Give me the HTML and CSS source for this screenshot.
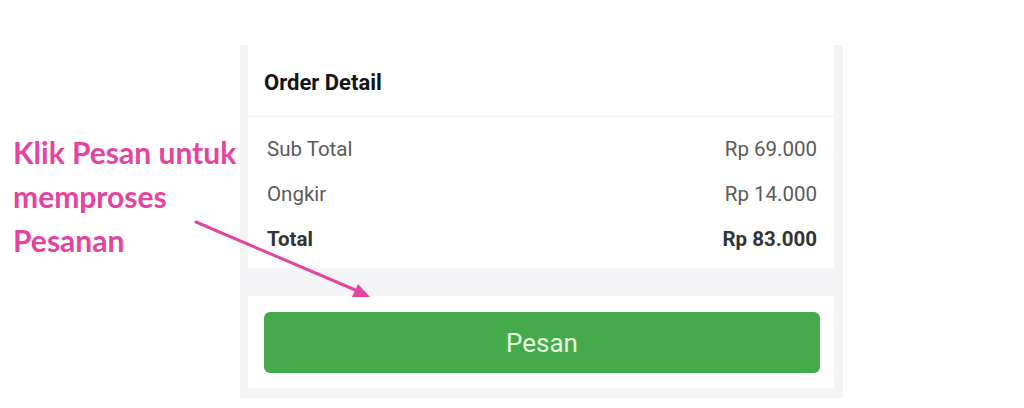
FILE: index.html
```html
<!DOCTYPE html>
<html>
<head>
<meta charset="utf-8">
<link rel="stylesheet" href="styles.css">
</head>
<body>
<div class="stage">
  <div class="note">
    <p class="note-text">Klik Pesan untuk<br>memproses<br>Pesanan</p>
  </div>
  <div class="phone">
    <section class="card detail">
      <h2 class="detail-title">Order Detail</h2>
      <div class="rows">
        <div class="row"><span>Sub Total</span><span>Rp 69.000</span></div>
        <div class="row"><span>Ongkir</span><span>Rp 14.000</span></div>
        <div class="row total"><span>Total</span><span>Rp 83.000</span></div>
      </div>
    </section>
    <section class="card action">
      <button class="btn-pesan">Pesan</button>
    </section>
  </div>
  <svg class="arrow" width="1024" height="408" viewBox="0 0 1024 408">
    <line x1="196" y1="222" x2="360" y2="292" stroke="#e4449e" stroke-width="3" stroke-linecap="round"/>
    <polygon points="370,297 352,297 358,284" fill="#e4449e"/>
  </svg>
</div>
</body>
</html>
```

FILE: styles.css
```css
html, body {
  margin: 0;
  padding: 0;
  background: #ffffff;
}
.stage {
  position: relative;
  width: 1024px;
  height: 408px;
  display: flex;
  overflow: hidden;
}
.note {
  width: 240px;
  padding-top: 130px;
  box-sizing: border-box;
}
.note-text {
  margin: 0 0 0 13px;
  font-family: Lato, "Open Sans", sans-serif;
  font-weight: 700;
  font-size: 30px;
  line-height: 44px;
  color: #e4449e;
  white-space: nowrap;
}
.phone {
  margin-top: 45px;
  width: 603px;
  height: 353px;
  background: #f4f4f6;
  padding: 0 9px 0 8px;
  box-sizing: border-box;
  display: flex;
  flex-direction: column;
  gap: 28px;
  font-family: Roboto, sans-serif;
}
.card {
  background: #ffffff;
}
.detail {
  height: 223px;
}
.detail-title {
  margin: 0;
  height: 72px;
  padding: 3px 0 0 16px;
  display: flex;
  align-items: center;
  font-size: 22px;
  font-weight: 700;
  color: #151515;
  border-bottom: 1px solid #f0f0f1;
  box-sizing: border-box;
}
.rows {
  padding: 9px 17px 0 19px;
  display: flex;
  flex-direction: column;
}
.row {
  display: flex;
  justify-content: space-between;
  height: 45px;
  align-items: center;
  font-size: 20.5px;
  color: #5a5a5a;
}
.row.total {
  font-weight: 700;
  color: #333333;
}
.action {
  height: 92px;
  padding: 16px 14px 0 16px;
  box-sizing: border-box;
}
.btn-pesan {
  width: 100%;
  height: 61px;
  border: none;
  border-radius: 6px;
  background: #45aa4c;
  color: #e4fbd9;
  font-family: Roboto, sans-serif;
  font-size: 26px;
  display: block;
}
.arrow {
  position: absolute;
  left: 0;
  top: 0;
  pointer-events: none;
}
```
